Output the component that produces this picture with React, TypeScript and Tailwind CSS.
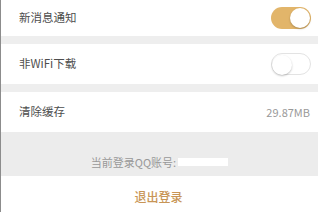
import React from "react";

function Toggle({ on }: { on: boolean }) {
  return (
    <div
      className={
        "relative h-[22px] w-[40px] rounded-full " +
        (on ? "bg-[#e2b56a]" : "bg-white border border-[#e3e3e3]")
      }
    >
      <div
        className={
          "absolute top-[1px] h-[20px] w-[20px] rounded-full bg-white shadow-[0_1px_2px_rgba(0,0,0,0.25)] " +
          (on ? "right-[1px]" : "left-[0px] top-[0px]")
        }
      />
    </div>
  );
}

export default function App() {
  const font = { fontFamily: '"Noto Sans CJK SC", "Noto Sans", sans-serif' };
  return (
    <div
      className="flex h-[212px] w-[318px] flex-col overflow-hidden border-l border-[#8c8c8c] bg-white"
      style={font}
    >
      <div className="flex h-[36px] items-center justify-between pl-[18px] pr-[7px]">
        <span className="text-[11.5px] text-[#4d4d4d]">新消息通知</span>
        <Toggle on />
      </div>
      <div className="h-[8px] bg-[#eeeeee]" />
      <div className="flex h-[40px] items-center justify-between pl-[18px] pr-[7px]">
        <span className="text-[11.5px] text-[#4d4d4d]">非WiFi下载</span>
        <Toggle on={false} />
      </div>
      <div className="h-[8px] bg-[#eeeeee]" />
      <div className="flex h-[40px] items-center justify-between pl-[18px] pr-[8px]">
        <span className="text-[11.5px] text-[#4d4d4d]">清除缓存</span>
        <span className="text-[11px] text-[#999]">29.87MB</span>
      </div>
      <div className="flex h-[44px] items-end justify-center bg-[#ececec] pb-[6px]">
        <div className="flex items-center">
          <span className="text-[11px] text-[#999]">当前登录QQ账号:</span>
          <div className="ml-[2px] h-[8px] w-[50px] bg-white" />
        </div>
      </div>
      <div className="flex flex-1 items-center justify-center pr-[2px] pt-[5px]">
        <span className="text-[12px] font-medium text-[#c89556]">退出登录</span>
      </div>
    </div>
  );
}
